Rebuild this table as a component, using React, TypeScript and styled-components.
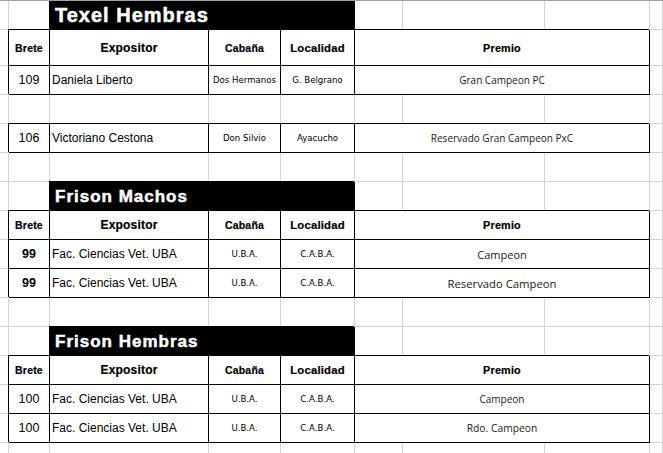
import React, { Fragment } from 'react';
import styled, { createGlobalStyle, css } from 'styled-components';

const GRID = '#d4d4d4';

const GlobalStyle = createGlobalStyle`
  html, body { margin: 0; padding: 0; background: #ffffff; }
  body { font-family: "Liberation Sans", Arial, sans-serif; color: #000; }
`;

const Sheet = styled.div`
  display: grid;
  grid-template-columns: 9px 41px 159px 72px 74px 48px 142px 105px 1fr;
  grid-template-rows: 29px 36px;
  grid-auto-rows: 29px;
  width: 663px;
  height: 453px;
  overflow: hidden;
  box-sizing: border-box;
  border-top: 1px solid #a3a3a3;
  background: #ffffff;
`;

const Cell = styled.div<{ $span?: number; $boxed?: boolean; $left?: boolean }>`
  box-sizing: border-box;
  min-width: 0;
  display: flex;
  align-items: center;
  justify-content: ${(p) => (p.$left ? 'flex-start' : 'center')};
  padding-left: ${(p) => (p.$left ? '2px' : '0')};
  border-right: 1px solid ${GRID};
  border-bottom: 1px solid ${GRID};
  white-space: nowrap;
  ${(p) => p.$span && css`grid-column: span ${p.$span};`}
  ${(p) =>
    p.$boxed &&
    css`
      border-right-color: #000;
      border-bottom-color: #000;
      box-shadow: -1px -1px 0 #000;
    `}
`;

const TitleBar = styled(Cell)<{ $size: number }>`
  justify-content: flex-start;
  padding-left: 5px;
  padding-top: 1px;
  background: #000;
  color: #fff;
  font-family: "Liberation Sans", Arial, sans-serif;
  font-weight: 700;
  font-size: ${(p) => p.$size}px;
  letter-spacing: 1px;
  -webkit-text-stroke: 0.5px #fff;
`;

const HeadText = styled.span<{ $size?: number }>`
  font-family: "Liberation Sans", Arial, sans-serif;
  font-weight: 700;
  font-size: ${(p) => p.$size ?? 11}px;
  letter-spacing: 0.2px;
  -webkit-text-stroke: 0.2px #000;
`;

const NumText = styled.span<{ $bold?: boolean }>`
  font-family: "Liberation Sans", Arial, sans-serif;
  font-size: 12.5px;
  font-weight: ${(p) => (p.$bold ? 700 : 400)};
`;

const NameText = styled.span`
  font-family: "Liberation Sans", Arial, sans-serif;
  font-size: 12px;
`;

const SmallText = styled.span`
  font-family: "DejaVu Sans", Verdana, sans-serif;
  font-size: 8.6px;
`;

const PrizeText = styled.span<{ $size: number }>`
  font-family: "Open Sans", "Liberation Sans", sans-serif;
  font-size: ${(p) => p.$size}px;
  color: #1a1a1a;
`;

type Row =
  | { kind: 'title'; text: string; size: number }
  | { kind: 'header' }
  | { kind: 'blank' }
  | {
      kind: 'data';
      brete: string;
      bold?: boolean;
      expositor: string;
      cabana: string;
      localidad: string;
      premio: string;
      prizeSize: number;
    };

const rows: Row[] = [
  { kind: 'title', text: 'Texel Hembras', size: 20 },
  { kind: 'header' },
  { kind: 'data', brete: '109', expositor: 'Daniela Liberto', cabana: 'Dos Hermanos', localidad: 'G. Belgrano', premio: 'Gran Campeon PC', prizeSize: 10 },
  { kind: 'blank' },
  { kind: 'data', brete: '106', expositor: 'Victoriano Cestona', cabana: 'Don Silvio', localidad: 'Ayacucho', premio: 'Reservado Gran Campeon PxC', prizeSize: 10 },
  { kind: 'blank' },
  { kind: 'title', text: 'Frison Machos', size: 17 },
  { kind: 'header' },
  { kind: 'data', brete: '99', bold: true, expositor: 'Fac. Ciencias Vet. UBA', cabana: 'U.B.A.', localidad: 'C.A.B.A.', premio: 'Campeon', prizeSize: 11 },
  { kind: 'data', brete: '99', bold: true, expositor: 'Fac. Ciencias Vet. UBA', cabana: 'U.B.A.', localidad: 'C.A.B.A.', premio: 'Reservado Campeon', prizeSize: 11.3 },
  { kind: 'blank' },
  { kind: 'title', text: 'Frison Hembras', size: 17 },
  { kind: 'header' },
  { kind: 'data', brete: '100', expositor: 'Fac. Ciencias Vet. UBA', cabana: 'U.B.A.', localidad: 'C.A.B.A.', premio: 'Campeon', prizeSize: 10 },
  { kind: 'data', brete: '100', expositor: 'Fac. Ciencias Vet. UBA', cabana: 'U.B.A.', localidad: 'C.A.B.A.', premio: 'Rdo. Campeon', prizeSize: 10.3 },
  { kind: 'blank' },
];

function SheetRow({ row }: { row: Row }) {
  if (row.kind === 'blank') {
    return (
      <>
        {Array.from({ length: 9 }).map((_, i) => (
          <Cell key={i} />
        ))}
      </>
    );
  }
  if (row.kind === 'title') {
    return (
      <>
        <Cell />
        <Cell />
        <TitleBar $span={3} $boxed $size={row.size}>
          {row.text}
        </TitleBar>
        <Cell />
        <Cell />
        <Cell />
        <Cell />
      </>
    );
  }
  if (row.kind === 'header') {
    return (
      <>
        <Cell />
        <Cell $boxed>
          <HeadText $size={10.5}>Brete</HeadText>
        </Cell>
        <Cell $boxed>
          <HeadText $size={12}>Expositor</HeadText>
        </Cell>
        <Cell $boxed>
          <HeadText $size={10.5}>Cabaña</HeadText>
        </Cell>
        <Cell $boxed>
          <HeadText $size={11.3}>Localidad</HeadText>
        </Cell>
        <Cell $boxed $span={3}>
          <HeadText $size={10.8}>Premio</HeadText>
        </Cell>
        <Cell />
      </>
    );
  }
  return (
    <>
      <Cell />
      <Cell $boxed>
        <NumText $bold={row.bold}>{row.brete}</NumText>
      </Cell>
      <Cell $boxed $left>
        <NameText>{row.expositor}</NameText>
      </Cell>
      <Cell $boxed>
        <SmallText>{row.cabana}</SmallText>
      </Cell>
      <Cell $boxed>
        <SmallText>{row.localidad}</SmallText>
      </Cell>
      <Cell $boxed $span={3}>
        <PrizeText $size={row.prizeSize}>{row.premio}</PrizeText>
      </Cell>
      <Cell />
    </>
  );
}

export default function App() {
  return (
    <>
      <GlobalStyle />
      <Sheet>
        {rows.map((row, i) => (
          <Fragment key={i}>
            <SheetRow row={row} />
          </Fragment>
        ))}
      </Sheet>
    </>
  );
}
